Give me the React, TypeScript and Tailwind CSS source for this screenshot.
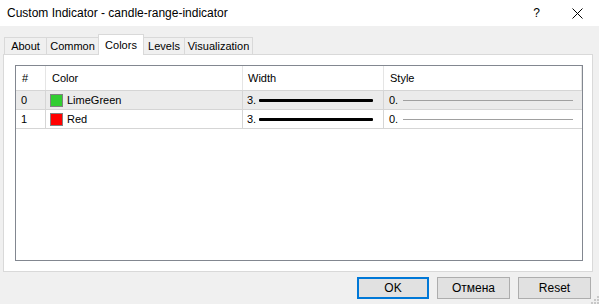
import React from 'react'

interface Row {
  id: number
  color: string
  name: string
  width: string
  style: string
}

const rows: Row[] = [
  { id: 0, color: '#32cd32', name: 'LimeGreen', width: '3.', style: '0.' },
  { id: 1, color: '#ff0000', name: 'Red', width: '3.', style: '0.' },
]

const tabs = [
  { name: 'About', w: 'w-[43px]' },
  { name: 'Common', w: 'w-[53px]' },
  { name: 'Colors', w: 'w-[46px]' },
  { name: 'Levels', w: 'w-[42px]' },
  { name: 'Visualization', w: 'w-[69px]' },
]

const font = { fontFamily: '"Liberation Sans", Arial, sans-serif' }

const App: React.FC = () => {
  return (
    <div className="w-[599px] h-[304px] flex flex-col bg-[#f0f0f0] text-black overflow-hidden" style={font}>
      {/* title bar */}
      <div className="h-[26px] bg-white flex items-center pl-[7px] pr-[14px] shrink-0">
        <span className="text-[12px] leading-none">Custom Indicator - candle-range-indicator</span>
        <span className="ml-auto text-[12px] mr-[32px]">?</span>
        <svg width="11" height="11" viewBox="0 0 11 11" className="mr-[2px]">
          <path d="M0.5 0.5 L10.5 10.5 M10.5 0.5 L0.5 10.5" stroke="#000" strokeWidth="1" />
        </svg>
      </div>

      {/* tabs */}
      <div className="flex pl-[4px] pt-[8px] h-[28px] shrink-0 items-end">
        {tabs.map((t) =>
          t.name === 'Colors' ? (
            <div
              key={t.name}
              className={`${t.w} h-[21px] bg-white border border-b-0 border-[#d9d9d9] text-[11px] flex items-center justify-center -mb-px -mr-px relative z-10`}
            >
              {t.name}
            </div>
          ) : (
            <div
              key={t.name}
              className={`${t.w} h-[17px] bg-[#f0f0f0] border border-b-0 border-[#d9d9d9] text-[11px] flex items-center justify-center -mr-px`}
            >
              {t.name}
            </div>
          )
        )}
      </div>

      {/* panel */}
      <div className="ml-[3px] mr-[6px] h-[218px] bg-white border border-[#d9d9d9] pt-[10px] pl-[11px] pr-[9px] pb-[10px] flex shrink-0">
        <div className="flex-1 border border-[#828790] bg-white text-[11px]">
          <div className="grid grid-cols-[30px_197px_141px_1fr] h-[25px] border-b border-[#d5d5d5]">
            <div className="border-r border-[#e5e5e5] pl-[6px] flex items-center">#</div>
            <div className="border-r border-[#e5e5e5] pl-[6px] flex items-center">Color</div>
            <div className="border-r border-[#e5e5e5] pl-[5px] flex items-center">Width</div>
            <div className="border-r border-[#e5e5e5] pl-[6px] flex items-center">Style</div>
          </div>
          {rows.map((r) => (
            <div
              key={r.id}
              className={`grid grid-cols-[30px_197px_141px_1fr] h-[19px] border-b border-[#d5d5d5] ${r.id === 0 ? 'bg-[#ebebeb]' : 'bg-white'}`}
            >
              <div className="border-r border-[#d5d5d5] pl-[5px] flex items-center">{r.id}</div>
              <div className="border-r border-[#d5d5d5] pl-[4px] flex items-center">
                <span className="w-[13px] h-[13px] border border-[#808080] mr-[4px]" style={{ backgroundColor: r.color }} />
                {r.name}
              </div>
              <div className="border-r border-[#d5d5d5] pl-[4px] flex items-center">
                <span>{r.width}</span>
                <span className="ml-[3px] h-[3px] w-[114px] bg-black rounded-[1px]" />
              </div>
              <div className="pl-[5px] flex items-center pr-[9px]">
                <span>{r.style}</span>
                <span className="ml-[5px] h-px flex-1 bg-[#a0a0a0]" />
              </div>
            </div>
          ))}
        </div>
      </div>

      {/* buttons */}
      <div className="flex justify-end gap-[8px] pr-[8px] pt-[5px] relative flex-1">
        <button className="w-[72px] h-[22px] bg-[#e1e1e1] border-2 border-[#0078d7] text-[12px]">OK</button>
        <button className="w-[73px] h-[22px] bg-[#e1e1e1] border border-[#adadad] text-[12px]">Отмена</button>
        <button className="w-[73px] h-[22px] bg-[#e1e1e1] border border-[#adadad] text-[12px]">Reset</button>
        <svg width="10" height="10" viewBox="0 0 10 10" className="absolute right-0 bottom-0">
          <rect x="8" y="2" width="2" height="2" fill="#c8c8c8" />
          <rect x="5" y="5" width="2" height="2" fill="#c8c8c8" />
          <rect x="8" y="5" width="2" height="2" fill="#c8c8c8" />
          <rect x="2" y="8" width="2" height="2" fill="#c8c8c8" />
          <rect x="5" y="8" width="2" height="2" fill="#c8c8c8" />
          <rect x="8" y="8" width="2" height="2" fill="#c8c8c8" />
        </svg>
      </div>
    </div>
  )
}

export default App
